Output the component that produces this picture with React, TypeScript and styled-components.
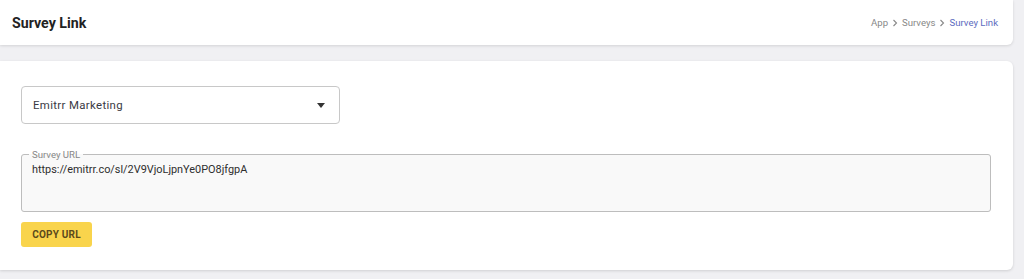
import React from "react";
import styled, { createGlobalStyle } from "styled-components";

const GlobalStyle = createGlobalStyle`
  html, body {
    margin: 0;
    padding: 0;
    background: #f0f0f3;
    font-family: Roboto, "Liberation Sans", sans-serif;
  }
`;

const Page = styled.div`
  width: 1024px;
  height: 279px;
  padding-right: 11px;
  box-sizing: border-box;
  display: flex;
  flex-direction: column;
  gap: 16px;
`;

const Header = styled.header`
  height: 45px;
  background: #fff;
  border-bottom-right-radius: 6px;
  box-shadow: 0 1px 3px rgba(0, 0, 0, 0.12);
  display: flex;
  align-items: center;
  justify-content: space-between;
  padding: 0 15px 0 12px;
`;

const Title = styled.h1`
  margin: 0;
  font-size: 14.2px;
  font-weight: 700;
  color: #222;
`;

const Crumbs = styled.nav`
  display: flex;
  align-items: center;
  gap: 4px;
  font-size: 9.6px;
`;

const Crumb = styled.span<{ $active?: boolean }>`
  color: ${(p) => (p.$active ? "#5c6bc0" : "#888")};
`;

const Chevron = () => (
  <svg width="6" height="8" viewBox="0 0 6 8">
    <path d="M1.5 1 L4.5 4 L1.5 7" fill="none" stroke="#888" strokeWidth="1.1" />
  </svg>
);

const Card = styled.section`
  height: 209px;
  background: #fff;
  border-radius: 0 6px 6px 0;
  box-shadow: 0 1px 3px rgba(0, 0, 0, 0.14);
  padding: 25px 22px 0 21px;
  box-sizing: border-box;
  display: flex;
  flex-direction: column;
`;

const Select = styled.div`
  width: 319px;
  height: 38px;
  box-sizing: border-box;
  border: 1px solid #c8c8c8;
  border-radius: 4px;
  display: flex;
  align-items: center;
  justify-content: space-between;
  padding: 0 14px 0 11px;
  font-size: 11.4px;
  letter-spacing: 0.35px;
  color: #3a3a44;
`;

const Arrow = styled.span`
  width: 0;
  height: 0;
  border-left: 4.5px solid transparent;
  border-right: 4.5px solid transparent;
  border-top: 5px solid #333;
`;

const Field = styled.fieldset`
  margin: 26px 0 0;
  height: 62px;
  box-sizing: border-box;
  border: 1px solid #bdbdbd;
  border-radius: 3px;
  background: #f9f9f9;
  padding: 0 10px;
`;

const Legend = styled.legend`
  font-size: 9.6px;
  color: #888;
  padding: 0 3px;
  margin-left: -3px;
  line-height: 1;
`;

const UrlText = styled.div`
  font-size: 10.9px;
  color: #2e2e2e;
  margin-top: 3px;
`;

const Button = styled.button`
  margin-top: 10px;
  align-self: flex-start;
  width: 71px;
  height: 25px;
  border: none;
  border-radius: 3px;
  background: #f9d44c;
  color: #5b4a1c;
  font-family: Roboto, "Liberation Sans", sans-serif;
  font-size: 10px;
  font-weight: 700;
  letter-spacing: 0.2px;
  padding: 0;
`;

export default function App() {
  return (
    <>
      <GlobalStyle />
      <Page>
        <Header>
          <Title>Survey Link</Title>
          <Crumbs>
            <Crumb>App</Crumb>
            <Chevron />
            <Crumb>Surveys</Crumb>
            <Chevron />
            <Crumb $active>Survey Link</Crumb>
          </Crumbs>
        </Header>
        <Card>
          <Select>
            Emitrr Marketing
            <Arrow />
          </Select>
          <Field>
            <Legend>Survey URL</Legend>
            <UrlText>https://emitrr.co/sl/2V9VjoLjpnYe0PO8jfgpA</UrlText>
          </Field>
          <Button>COPY URL</Button>
        </Card>
      </Page>
    </>
  );
}
